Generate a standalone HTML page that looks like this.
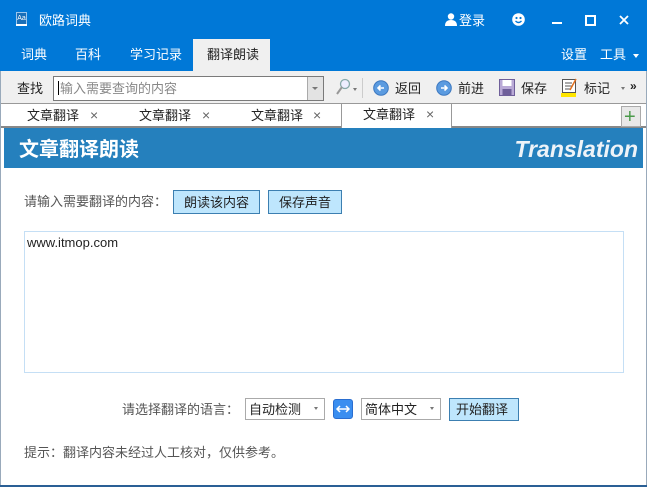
<!DOCTYPE html>
<html><head><meta charset="utf-8"><style>
*{margin:0;padding:0;box-sizing:border-box}
body{width:647px;height:487px;overflow:hidden;background:#fff;font-family:"Liberation Sans","Microsoft YaHei","Noto Sans CJK SC",sans-serif;font-size:13px;color:#222;position:relative}
.a{position:absolute}
.t{position:absolute;white-space:nowrap;line-height:1}
</style></head><body>
<div class="a" style="left:0;top:0;width:647px;height:71px;background:#0078d7"></div>
<div class="a" style="left:16px;top:12px;width:11px;height:14px;background:#1a6fb8;border:1px solid #9cc6ec;color:#fff;font-size:7px;line-height:11px;text-align:center">Aa</div>
<div class="a" style="left:16px;top:24px;width:11px;height:2px;background:#fff"></div>
<div class="t" style="left:39px;top:14px;color:#fff;font-size:13px">欧路词典</div>
<svg class="a" style="left:445px;top:13px" width="12" height="13"><circle cx="6" cy="3.5" r="3.2" fill="#fff"/><path d="M0 13 Q0 7 6 7 Q12 7 12 13Z" fill="#fff"/></svg>
<div class="t" style="left:459px;top:14px;color:#fff">登录</div>
<svg class="a" style="left:512px;top:13px" width="13" height="13"><circle cx="6.5" cy="6.5" r="6.3" fill="#fff"/><circle cx="4.5" cy="5" r="1.1" fill="#0078d7"/><circle cx="8.5" cy="5" r="1.1" fill="#0078d7"/><path d="M3.5 8 Q6.5 11 9.5 8" stroke="#0078d7" stroke-width="1.3" fill="none"/></svg>
<div class="a" style="left:552px;top:22px;width:10px;height:2px;background:#fff"></div>
<div class="a" style="left:585px;top:15px;width:11px;height:11px;border:2px solid #fff"></div>
<svg class="a" style="left:619px;top:15px" width="10" height="10"><path d="M1 1L9 9M9 1L1 9" stroke="#fff" stroke-width="1.8"/></svg>
<div class="t" style="left:21px;top:48px;color:#fff">词典</div>
<div class="t" style="left:75px;top:48px;color:#fff">百科</div>
<div class="t" style="left:130px;top:48px;color:#fff">学习记录</div>
<div class="a" style="left:193px;top:39px;width:77px;height:33px;background:#f0f0f0"></div>
<div class="t" style="left:207px;top:48px;color:#222">翻译朗读</div>
<div class="t" style="left:561px;top:48px;color:#fff">设置</div>
<div class="t" style="left:600px;top:48px;color:#fff">工具</div>
<div class="a" style="left:633px;top:54px;border:3px solid transparent;border-top:4px solid #fff"></div>
<div class="a" style="left:0;top:71px;width:647px;height:32px;background:#f0f0f0"></div>
<div class="t" style="left:17px;top:82px">查找</div>
<div class="a" style="left:53px;top:76px;width:271px;height:25px;background:#fff;border:1px solid #7a7a7a"></div>
<div class="a" style="left:307px;top:77px;width:16px;height:23px;background:#e3e3e3;border-left:1px solid #aaa"></div>
<div class="a" style="left:312px;top:87px;border:3px solid transparent;border-top:3px solid #777"></div>
<div class="a" style="left:58px;top:81px;width:1px;height:14px;background:#000"></div>
<div class="t" style="left:60px;top:82px;color:#888">输入需要查询的内容</div>
<svg class="a" style="left:335px;top:78px" width="16" height="18"><circle cx="10" cy="6" r="4.5" stroke="#8aa" stroke-width="1.3" fill="#eef"/><path d="M7 9L2 16" stroke="#999" stroke-width="2"/></svg>
<div class="a" style="left:353px;top:88px;border:2.5px solid transparent;border-top:3px solid #777"></div>
<div class="a" style="left:362px;top:78px;width:1px;height:20px;background:#ccc"></div>
<svg class="a" style="left:373px;top:80px" width="16" height="16"><circle cx="8" cy="8" r="7.3" fill="#5b9be0" stroke="#3c78c0"/><path d="M11 8H5M7.5 5.5L5 8L7.5 10.5" stroke="#fff" stroke-width="1.6" fill="none"/></svg>
<div class="t" style="left:395px;top:82px">返回</div>
<svg class="a" style="left:436px;top:80px" width="16" height="16"><circle cx="8" cy="8" r="7.3" fill="#5b9be0" stroke="#3c78c0"/><path d="M5 8H11M8.5 5.5L11 8L8.5 10.5" stroke="#fff" stroke-width="1.6" fill="none"/></svg>
<div class="t" style="left:458px;top:82px">前进</div>
<svg class="a" style="left:499px;top:79px" width="16" height="17"><rect x="0.5" y="0.5" width="15" height="16" fill="#b9a9d6" stroke="#6f5f9a"/><rect x="3.5" y="1" width="9" height="6" fill="#fff"/><rect x="3.5" y="10" width="9" height="6" fill="#6f5f9a"/></svg>
<div class="t" style="left:521px;top:82px">保存</div>
<svg class="a" style="left:561px;top:78px" width="18" height="19"><rect x="1.5" y="1.5" width="13" height="13" fill="#fff" stroke="#555"/><path d="M4 5H11M4 8H11M4 11H9" stroke="#555"/><path d="M15 1L9 12" stroke="#e07020" stroke-width="1.5"/><rect x="0" y="15" width="15" height="4" fill="#ffe600"/></svg>
<div class="t" style="left:584px;top:82px">标记</div>
<div class="a" style="left:621px;top:87px;border:2.5px solid transparent;border-top:3px solid #777"></div>
<div class="t" style="left:630px;top:80px;font-size:12px;font-weight:bold">»</div>
<div class="a" style="left:0;top:103px;width:647px;height:1px;background:#999"></div>
<div class="a" style="left:0;top:126px;width:647px;height:2px;background:#888"></div>
<div class="a" style="left:341px;top:103px;width:111px;height:25px;background:#fff;border:1px solid #999;border-bottom:none"></div>
<div class="t" style="left:27px;top:109px">文章翻译</div><div class="t" style="left:90px;top:108px;color:#666;font-size:14px">×</div>
<div class="t" style="left:139px;top:109px">文章翻译</div><div class="t" style="left:202px;top:108px;color:#666;font-size:14px">×</div>
<div class="t" style="left:251px;top:109px">文章翻译</div><div class="t" style="left:313px;top:108px;color:#666;font-size:14px">×</div>
<div class="t" style="left:363px;top:108px">文章翻译</div><div class="t" style="left:426px;top:107px;color:#666;font-size:14px">×</div>
<div class="a" style="left:621px;top:106px;width:20px;height:21px;background:#e8e8e8;border:1px solid #aaa"></div>
<div class="t" style="left:624px;top:107px;color:#4a9a4a;font-size:20px">+</div>
<div class="a" style="left:4px;top:128px;width:639px;height:40px;background:#2580bd"></div>
<div class="t" style="left:19px;top:140px;color:#fff;font-size:20px;font-weight:bold">文章翻译朗读</div>
<div class="t" style="right:9px;top:138px;color:#eef3f8;font-size:23px;font-weight:bold;font-style:italic">Translation</div>
<div class="t" style="left:24px;top:195px;color:#555">请输入需要翻译的内容：</div>
<div class="a" style="left:173px;top:190px;width:87px;height:24px;background:#bee6fd;border:1px solid #3c7fb1"></div>
<div class="t" style="left:184px;top:196px">朗读该内容</div>
<div class="a" style="left:268px;top:190px;width:74px;height:24px;background:#bee6fd;border:1px solid #3c7fb1"></div>
<div class="t" style="left:279px;top:196px">保存声音</div>
<div class="a" style="left:24px;top:231px;width:600px;height:142px;border:1px solid #c5dff5"></div>
<div class="t" style="left:27px;top:236px">www.itmop.com</div>
<div class="t" style="left:122px;top:403px;color:#555">请选择翻译的语言：</div>
<div class="a" style="left:245px;top:398px;width:80px;height:22px;border:1px solid #aaa;background:#fff"></div>
<div class="t" style="left:249px;top:403px">自动检测</div>
<div class="a" style="left:314px;top:407px;border:2.5px solid transparent;border-top:3px solid #777"></div>
<div class="a" style="left:333px;top:399px;width:20px;height:20px;background:#3a8ef0;border:1px solid #2a6ed0;border-radius:3px"></div>
<svg class="a" style="left:335px;top:403px" width="16" height="12"><path d="M2 6H14M5 3L2 6L5 9M11 3L14 6L11 9" stroke="#fff" stroke-width="1.5" fill="none"/></svg>
<div class="a" style="left:361px;top:398px;width:80px;height:22px;border:1px solid #aaa;background:#fff"></div>
<div class="t" style="left:365px;top:403px">简体中文</div>
<div class="a" style="left:430px;top:407px;border:2.5px solid transparent;border-top:3px solid #777"></div>
<div class="a" style="left:449px;top:398px;width:70px;height:23px;background:#bee6fd;border:1px solid #3c7fb1"></div>
<div class="t" style="left:456px;top:403px">开始翻译</div>
<div class="t" style="left:24px;top:446px;color:#555">提示：翻译内容未经过人工核对，仅供参考。</div>
<div class="a" style="left:0;top:71px;width:1px;height:416px;background:#9ab"></div>
<div class="a" style="left:646px;top:71px;width:1px;height:416px;background:#9ab"></div>
<div class="a" style="left:0;top:485px;width:647px;height:2px;background:#2a5f95"></div>
</body></html>
